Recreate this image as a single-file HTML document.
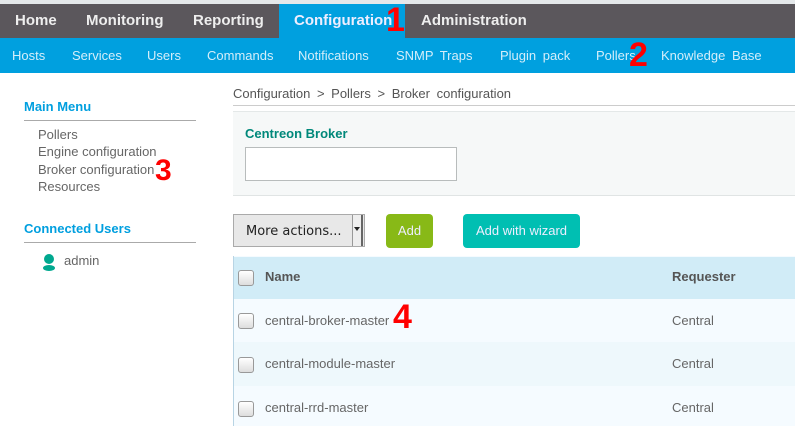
<!DOCTYPE html>
<html><head><style>
*{margin:0;padding:0;box-sizing:border-box}
body{width:795px;height:426px;overflow:hidden;background:#fff;font-family:"Liberation Sans",sans-serif;position:relative}
.a{position:absolute;white-space:nowrap}
.red{color:#f00;font-weight:bold;font-size:34px;position:absolute;line-height:1}
.cb{position:absolute;width:16px;height:16px;border:1px solid #999;border-radius:3px;background:linear-gradient(#fff,#ddd)}
</style></head><body>
<div class="a" style="left:0;top:0;width:795px;height:4px;background:#e4e8ea"></div>
<div class="a" style="left:0;top:4px;width:795px;height:34px;background:#5b575c"></div>
<div class="a" style="left:279px;top:4px;width:126px;height:34px;background:#00a0df"></div>
<div class="a" style="left:0;top:38px;width:795px;height:35px;background:#00a0df"></div>
<div class="a" style="top:12px;left:15px;color:#eee;font-weight:bold;font-size:15px">Home</div>
<div class="a" style="top:12px;left:86px;color:#eee;font-weight:bold;font-size:15px">Monitoring</div>
<div class="a" style="top:12px;left:193px;color:#eee;font-weight:bold;font-size:15px">Reporting</div>
<div class="a" style="top:12px;left:294px;color:#eef;font-weight:bold;font-size:15px">Configuration</div>
<div class="a" style="top:12px;left:421px;color:#eee;font-weight:bold;font-size:15px">Administration</div>
<div class="red" style="left:386px;top:3px">1</div>
<div class="a" style="top:48px;left:0;font-size:13px;color:#d4eefa;word-spacing:3px">
<span style="position:absolute;left:12px">Hosts</span><span style="position:absolute;left:72px">Services</span><span style="position:absolute;left:147px">Users</span><span style="position:absolute;left:207px">Commands</span><span style="position:absolute;left:298px">Notifications</span><span style="position:absolute;left:396px">SNMP Traps</span><span style="position:absolute;left:500px">Plugin pack</span><span style="position:absolute;left:596px">Pollers</span><span style="position:absolute;left:661px">Knowledge Base</span></div>
<div class="red" style="left:629px;top:38px">2</div>

<div class="a" style="left:24px;top:99px;color:#009fdf;font-weight:bold;font-size:13px">Main Menu</div>
<div class="a" style="left:24px;top:120px;width:172px;height:1px;background:#aaa"></div>
<div class="a" style="left:38px;top:126px;font-size:13px;color:#666;line-height:17.3px">Pollers<br>Engine configuration<br>Broker configuration<br>Resources</div>
<div class="red" style="left:155px;top:156px;font-size:30px">3</div>
<div class="a" style="left:24px;top:221px;color:#009fdf;font-weight:bold;font-size:13px">Connected Users</div>
<div class="a" style="left:24px;top:242px;width:172px;height:1px;background:#aaa"></div>
<svg class="a" style="left:42px;top:253px" width="14" height="18"><circle cx="7" cy="6" r="5" fill="#00a88f"/><ellipse cx="7" cy="15" rx="6" ry="3" fill="#00a88f"/></svg>
<div class="a" style="left:64px;top:253px;font-size:13px;color:#666">admin</div>

<div class="a" style="left:233px;top:86px;font-size:13px;color:#555;word-spacing:3px">Configuration &gt; Pollers &gt; Broker configuration</div>
<div class="a" style="left:233px;top:105px;width:562px;height:1px;background:#ccc"></div>
<div class="a" style="left:233px;top:111px;width:562px;height:85px;background:#f6f8f8;border-top:1px solid #e4e8e8;border-bottom:1px solid #e0e4e4"></div>
<div class="a" style="left:245px;top:126px;color:#00887a;font-weight:bold;font-size:13px">Centreon Broker</div>
<div class="a" style="left:245px;top:147px;width:212px;height:34px;background:#fff;border:1px solid #b8bcbc"></div>

<div class="a" style="left:233px;top:214px;width:132px;height:33px;background:#e8e8e8;border:1px solid #aaa"></div>
<div class="a" style="left:246px;top:224px;font-family:'DejaVu Sans',sans-serif;font-size:13px;color:#222">More actions...</div>
<div class="a" style="left:352px;top:215px;width:11px;height:31px;border-left:1px solid #999;border-right:2px solid #666;background:#eee"></div>
<div class="a" style="left:354px;top:227px;border:3px solid transparent;border-top:4px solid #222;width:0;height:0"></div>
<div class="a" style="left:386px;top:214px;width:47px;height:34px;background:#88b917;border-radius:4px;color:#eef;font-size:13px;text-align:center;line-height:34px">Add</div>
<div class="a" style="left:463px;top:214px;width:117px;height:34px;background:#00bfb2;border-radius:4px;color:#eef;font-size:13px;text-align:center;line-height:34px">Add with wizard</div>

<div class="a" style="left:233px;top:256px;width:562px;height:170px;border-left:1px solid #b8d4e4;background:#f5fbff"></div>
<div class="a" style="left:234px;top:257px;width:561px;height:42px;background:#d1ecf7"></div>
<div class="a" style="left:234px;top:342px;width:561px;height:44px;background:#eef8fc"></div>
<div class="cb" style="left:238px;top:270px"></div>
<div class="a" style="left:265px;top:269px;font-size:13px;font-weight:bold;color:#555">Name</div>
<div class="a" style="left:672px;top:269px;font-size:13px;font-weight:bold;color:#555">Requester</div>
<div class="cb" style="left:238px;top:313px"></div>
<div class="a" style="left:265px;top:313px;font-size:13px;color:#666">central-broker-master</div>
<div class="a" style="left:672px;top:313px;font-size:13px;color:#666">Central</div>
<div class="red" style="left:393px;top:300px">4</div>
<div class="cb" style="left:238px;top:357px"></div>
<div class="a" style="left:265px;top:356px;font-size:13px;color:#666">central-module-master</div>
<div class="a" style="left:672px;top:356px;font-size:13px;color:#666">Central</div>
<div class="cb" style="left:238px;top:401px"></div>
<div class="a" style="left:265px;top:400px;font-size:13px;color:#666">central-rrd-master</div>
<div class="a" style="left:672px;top:400px;font-size:13px;color:#666">Central</div>
</body></html>
